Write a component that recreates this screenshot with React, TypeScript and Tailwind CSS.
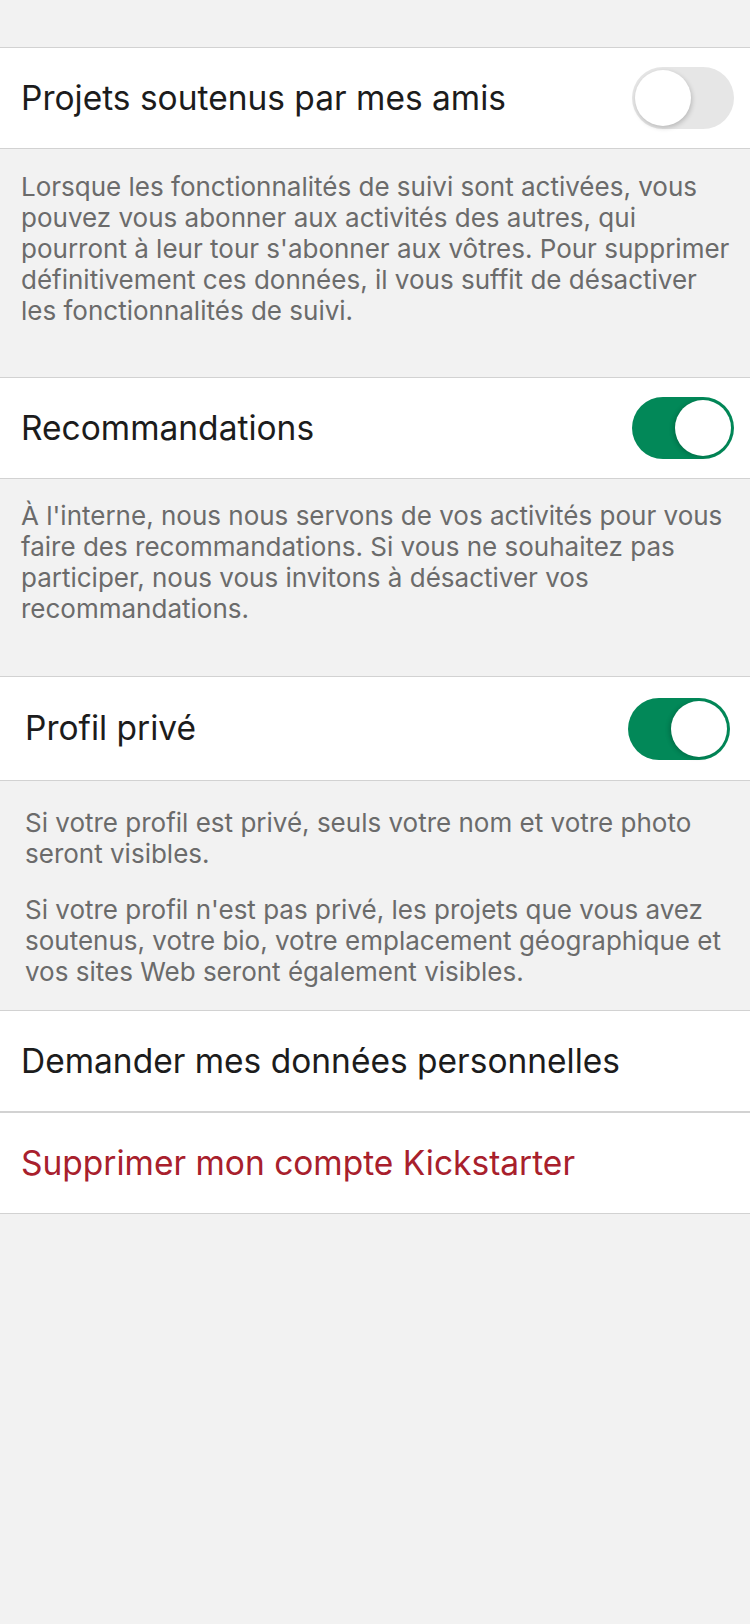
import React from "react";

function Toggle({ on }: { on: boolean }) {
  if (on) {
    return (
      <div className="flex h-[62px] w-[102px] shrink-0 items-center justify-end rounded-full bg-[#028858] p-[3px]">
        <div className="h-[56px] w-[56px] rounded-full bg-white shadow-[-2px_1px_4px_rgba(0,0,0,0.18)]" />
      </div>
    );
  }
  return (
    <div className="flex h-[62px] w-[102px] shrink-0 items-center justify-start rounded-full bg-[#e6e6e6] p-[3px]">
      <div className="h-[56px] w-[56px] rounded-full bg-white shadow-[1px_2px_5px_rgba(0,0,0,0.2)]" />
    </div>
  );
}

function ToggleRow({ label, on, inset }: { label: string; on: boolean; inset?: boolean }) {
  return (
    <div
      className={
        inset
          ? "flex h-[105px] items-center justify-between border-y border-[#d2d2d2] bg-white pl-[25px] pr-[20px]"
          : "flex h-[102px] items-center justify-between border-y border-[#d2d2d2] bg-white pl-[21px] pr-[16px]"
      }
    >
      <span className="text-[33.5px] text-[#1c1c1c]">{label}</span>
      <Toggle on={on} />
    </div>
  );
}

function LinkRow({ label, danger }: { label: string; danger?: boolean }) {
  return (
    <div className="flex h-[102px] items-center border-y border-[#d2d2d2] bg-white pl-[21px]">
      <span className={danger ? "text-[33.5px] text-[#a8202c]" : "text-[33.5px] text-[#1c1c1c]"}>{label}</span>
    </div>
  );
}

export default function App() {
  return (
    <div className="min-h-[1624px] w-[750px] overflow-hidden bg-[#f2f2f2] pt-[47px] font-['Inter',sans-serif]">
      <ToggleRow label="Projets soutenus par mes amis" on={false} />
      <div className="whitespace-nowrap pl-[21px] pt-[22px] pb-[51px] text-[26px] leading-[31px] text-[#6b6b6b]">
        Lorsque les fonctionnalités de suivi sont activées, vous
        <br />
        pouvez vous abonner aux activités des autres, qui
        <br />
        pourront à leur tour s'abonner aux vôtres. Pour supprimer
        <br />
        définitivement ces données, il vous suffit de désactiver
        <br />
        les fonctionnalités de suivi.
      </div>

      <ToggleRow label="Recommandations" on={true} />
      <div className="whitespace-nowrap pl-[21px] pt-[21px] pb-[52px] text-[26px] leading-[31px] text-[#6b6b6b]">
        À l'interne, nous nous servons de vos activités pour vous
        <br />
        faire des recommandations. Si vous ne souhaitez pas
        <br />
        participer, nous vous invitons à désactiver vos
        <br />
        recommandations.
      </div>

      <ToggleRow label="Profil privé" on={true} inset />
      <div className="flex flex-col gap-[25px] whitespace-nowrap pl-[25px] pt-[26px] pb-[23px] text-[26px] leading-[31px] text-[#6b6b6b]">
        <p>
          Si votre profil est privé, seuls votre nom et votre photo
          <br />
          seront visibles.
        </p>
        <p>
          Si votre profil n'est pas privé, les projets que vous avez
          <br />
          soutenus, votre bio, votre emplacement géographique et
          <br />
          vos sites Web seront également visibles.
        </p>
      </div>

      <LinkRow label="Demander mes données personnelles" />
      <LinkRow label="Supprimer mon compte Kickstarter" danger />
    </div>
  );
}
